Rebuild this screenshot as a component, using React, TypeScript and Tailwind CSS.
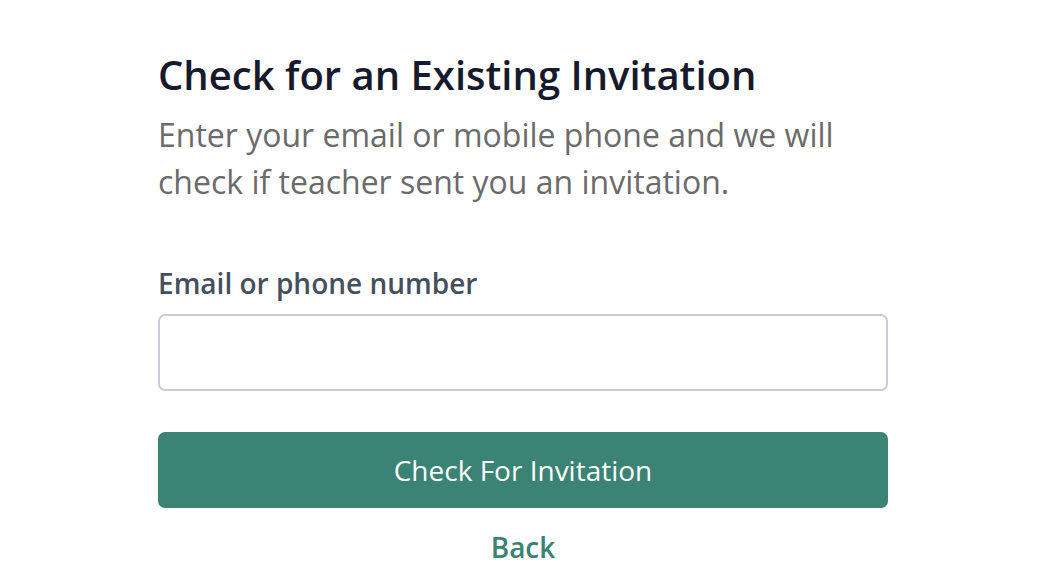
export default function App() {
  return (
    <div className="min-h-[576px] w-full bg-white font-['Open_Sans',sans-serif]">
      <div className="ml-[158px] w-[730px] pt-[51px]">
        {/* Heading */}
        <h1 className="text-[40px] font-semibold leading-[48px] text-[#161a2c]">
          Check for an Existing Invitation
        </h1>
        <p className="mt-[12px] text-[32px] leading-[47px] text-[#6b6b6b]">
          Enter your email or mobile phone and we will
          <br />
          check if teacher sent you an invitation.
        </p>

        {/* Form */}
        <form className="mt-[60px] flex flex-col" onSubmit={(e) => e.preventDefault()}>
          <label htmlFor="contact" className="text-[28px] font-semibold leading-[36px] text-[#44505e]">
            Email or phone number
          </label>
          <input
            id="contact"
            type="text"
            className="mt-[13px] h-[77px] w-full rounded-[7px] border-2 border-[#cacbd9] px-4 text-[28px] focus:outline-none"
          />
          <button
            type="submit"
            className="mt-[41px] h-[76px] w-full rounded-[7px] bg-[#3b8374] text-[28px] text-white"
          >
            Check For Invitation
          </button>
          <button type="button" className="mt-[19px] self-center text-[28px] font-semibold leading-[40px] text-[#3b8374]">
            Back
          </button>
        </form>
      </div>
    </div>
  );
}
